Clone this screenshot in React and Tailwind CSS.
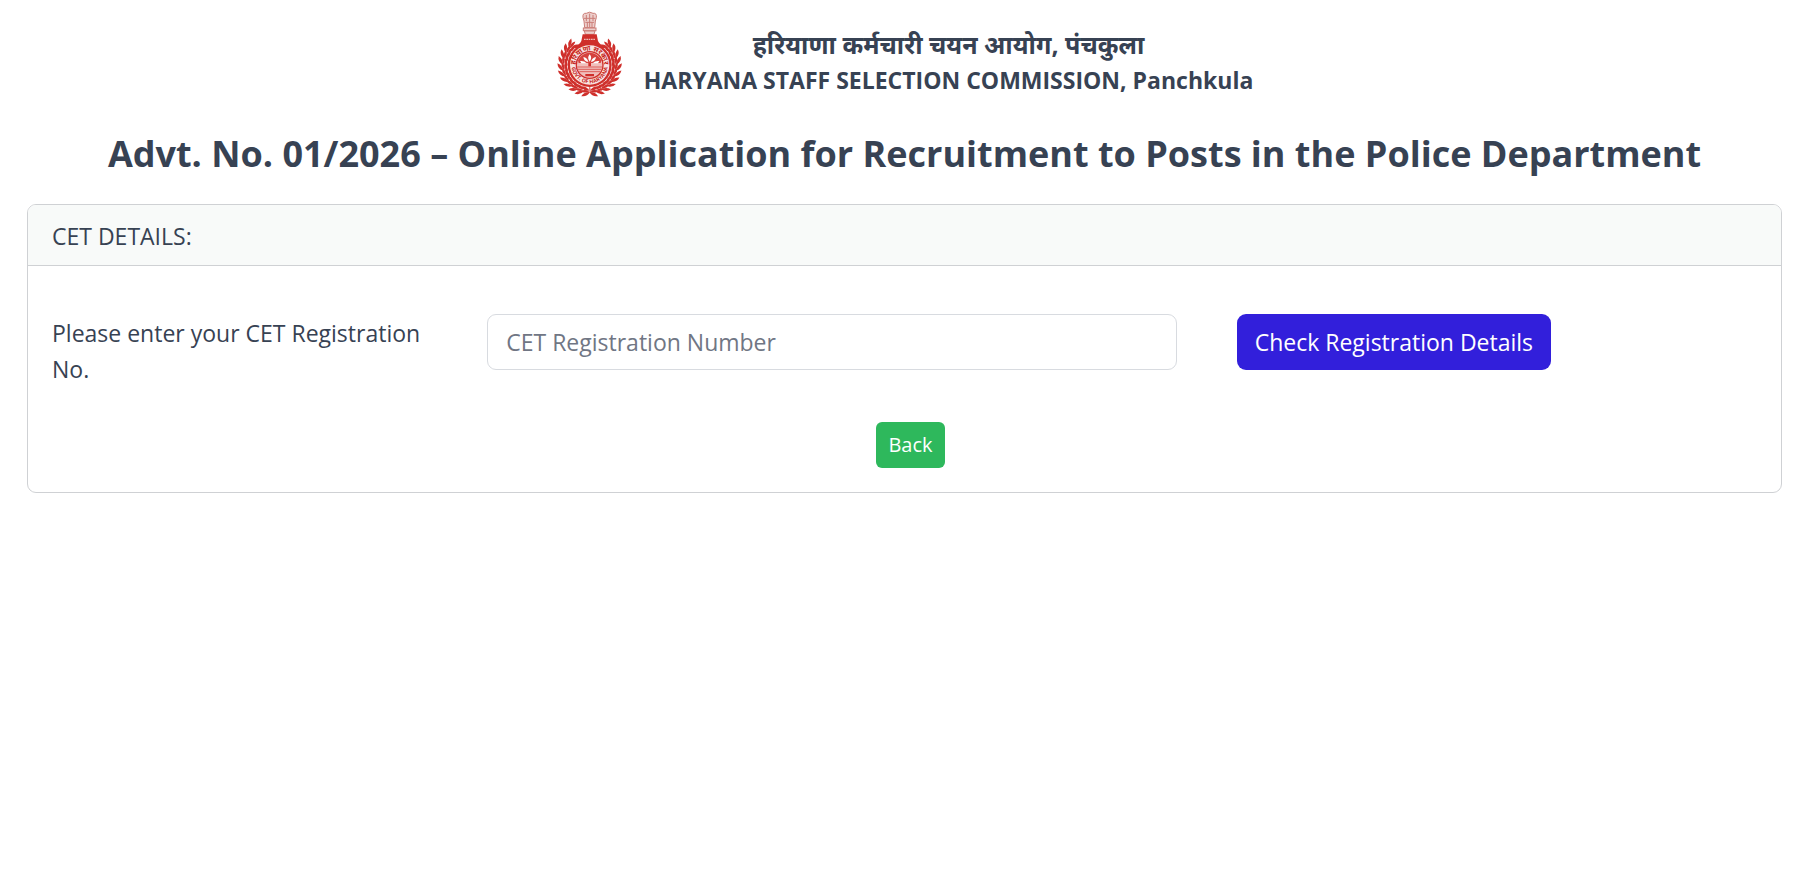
const LEAF_ANGLES = [-48, -35, -22, -9, 4, 17, 30, 43, 56, 69, 82]

function WreathBranch() {

    return LEAF_ANGLES.map(angle => (

        <g key={angle} transform={`rotate(${angle} 101 162) translate(181 162)`}>
            <path d="M-5 9 Q-16 -1 -13 -17 Q0 -8 -5 9 Z" />
            <path d="M-3 11 Q-6 -5 1 -15 Q9 -3 -3 11 Z" />
            <path d="M0 12 Q1 -5 16 -12 Q17 5 0 12 Z" />
            <path d="M-14 10 L2 14" stroke="#cf2f2b" strokeWidth="2" />
        </g>

    ))

}

function Emblem() {

    return (

        <svg viewBox="0 0 210 261" className="w-[70px] h-[87px] shrink-0" role="img" aria-label="Government of Haryana">

            <defs>
                <path id="ring-top" d="M58 162 A43 43 0 0 1 144 162" />
                <path id="ring-bottom" d="M46 162 A55 55 0 0 0 156 162" />
            </defs>

            {/* lion capital */}
            <g fill="#edcfcc" stroke="#cb7d77" strokeWidth="3">
                <path d="M81 20 Q79 5 91 7 Q101 0 111 7 Q123 5 121 20 L118 30 L116 50 H86 L84 30 Z" />
                <path d="M91 12 V30 M101 8 V48 M111 12 V30 M84 22 H118 M88 34 H114 M94 34 V50 M108 34 V50" />
                <rect x="82" y="51" width="38" height="8" />
                <path d="M85 60 H117 L114 70 H88 Z" />
            </g>

            {/* wreath */}
            <g fill="#cf2f2b">
                <WreathBranch />
            </g>
            <g fill="#cf2f2b" transform="matrix(-1 0 0 1 202 0)">
                <WreathBranch />
            </g>

            <path d="M80 70 H122 L126 90 Q130 100 152 112 H50 Q72 100 76 90 Z" fill="#cf2f2b" />
            <path d="M84 85 H118" stroke="#f0b9b6" strokeWidth="4" strokeDasharray="5 2" />
            <circle cx="101" cy="162" r="66" fill="#cf2f2b" />
            <circle cx="101" cy="162" r="59" fill="#f8e4e2" />
            <circle cx="101" cy="162" r="40" fill="#f0bfbc" stroke="#cf2f2b" strokeWidth="4" />

            <text fontSize="21" fill="#c62420" className="font-bold">
                <textPath href="#ring-top" startOffset="50%" textAnchor="middle">हरियाणा सरकार</textPath>
            </text>
            <text fontSize="16" fill="#c62420" className="font-bold">
                <textPath href="#ring-bottom" startOffset="50%" textAnchor="middle">GOVT. OF HARYANA</textPath>
            </text>

            {/* lotus above the water */}
            <path d="M66 148 Q78 125 101 125 Q124 125 136 148 L134 156 H68 Z" fill="#d5423e" />
            <path d="M101 130 Q110 140 101 152 Q92 140 101 130 Z M82 138 Q94 140 97 153 Q84 152 82 138 Z M120 138 Q108 140 105 153 Q118 152 120 138 Z M72 150 Q84 148 92 157 H76 Z M130 150 Q118 148 110 157 H126 Z" fill="#fff" />
            <path d="M64 168 H138 M66 175 H136 M70 182 H132" stroke="#dd5f5b" strokeWidth="3" />
            <path d="M97 156 H105 V166 H97 Z M88 189 H114 V196 H88 Z" fill="#cf2f2b" />

        </svg>

    )

}

function SiteHeader() {

    return (

        <header className="flex justify-center items-start gap-[18px] pt-[11px] font-bold">

            <Emblem />

            <div className="pt-[15px] text-center leading-9">
                <p className="text-[25px]">हरियाणा कर्मचारी चयन आयोग, पंचकुला</p>
                <p>HARYANA STAFF SELECTION COMMISSION, Panchkula</p>
            </div>

        </header>

    )

}

function CetDetails() {

    return (

        <section className="border border-[#cfd1d4] rounded-[9px] overflow-hidden">

            <h2 className="px-6 pt-[13px] pb-[11px] bg-[#f8faf9] border-b border-[#cfd1d4]">
                CET DETAILS:
            </h2>

            <form className="px-6 pt-12 pb-6">

                <div className="grid grid-cols-12 gap-x-9 items-start">

                    <label htmlFor="cetRegNo" className="col-span-3 pt-px">
                        Please enter your CET Registration No.
                    </label>

                    <input
                        id="cetRegNo"
                        type="text"
                        placeholder="CET Registration Number"
                        className="col-span-5 h-14 px-[18px] border border-[#d8dbe0] rounded-[9px] placeholder:text-[#707684]"
                    />

                    <div className="col-span-4 pl-6">
                        <button type="button" className="h-14 px-[18px] rounded-[9px] bg-[#321fdb] text-white whitespace-nowrap">
                            Check Registration Details
                        </button>
                    </div>

                </div>

                <div className="flex justify-center mt-[35px] pl-3">
                    <button type="button" className="h-[46px] px-3 rounded-md bg-[#2eb85c] text-white text-[20px]">
                        Back
                    </button>
                </div>

            </form>

        </section>

    )

}

export default function App() {

    return (

        <div className="px-[27px] bg-white text-[#374253] text-[23px] leading-9 font-['Open_Sans','Noto_Sans',sans-serif]">

            <SiteHeader />

            <h1 className="mt-[30px] mb-[24px] text-center text-[36px] leading-[52px] font-bold">
                Advt. No. 01/2026 – Online Application for Recruitment to Posts in the Police Department
            </h1>

            <CetDetails />

        </div>

    )

}
